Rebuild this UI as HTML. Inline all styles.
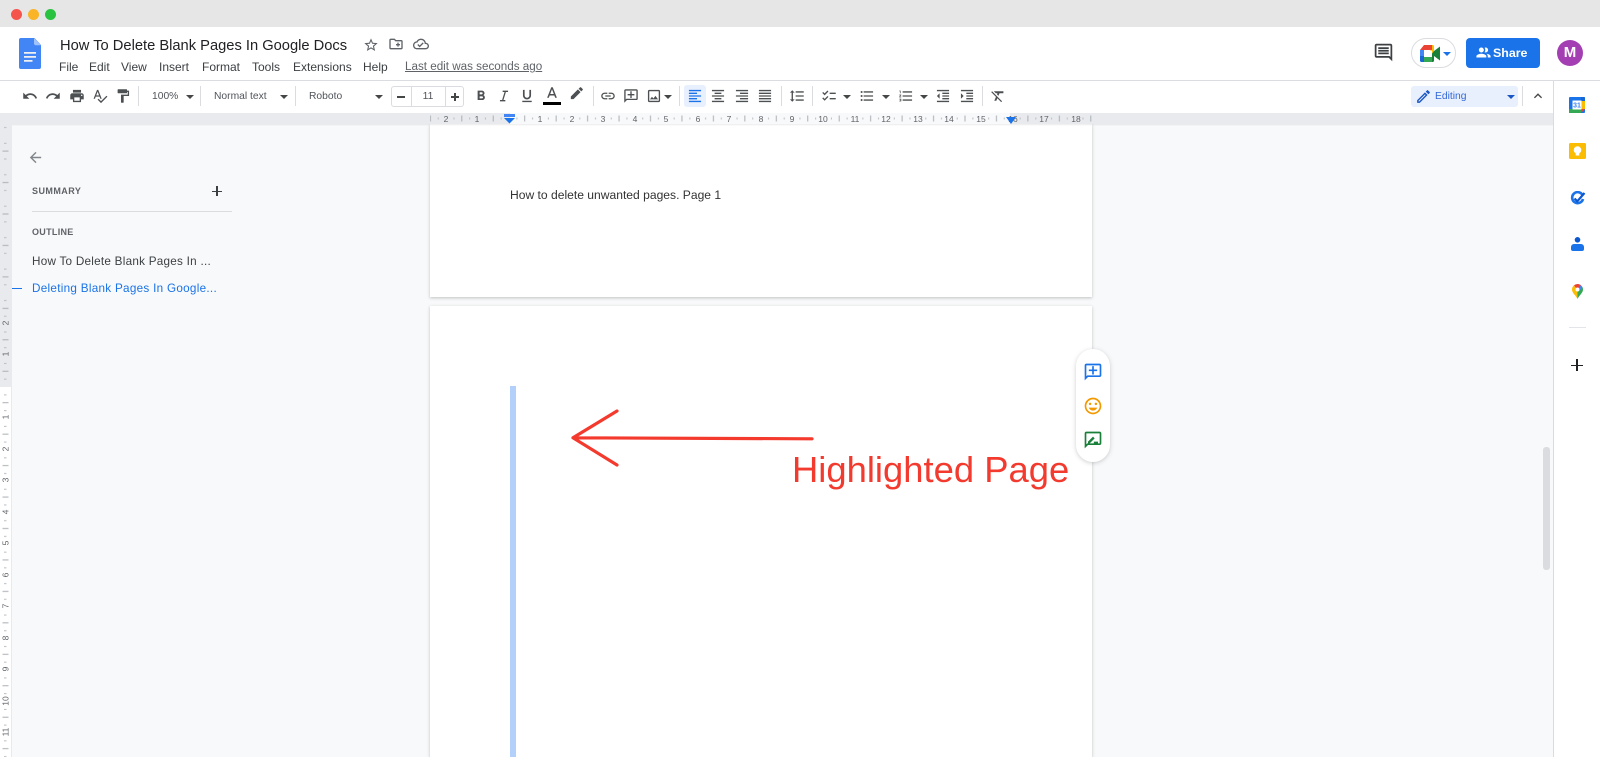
<!DOCTYPE html>
<html><head><meta charset="utf-8"><title>How To Delete Blank Pages In Google Docs</title>
<style>
html,body{margin:0;padding:0;width:1600px;height:757px;overflow:hidden;background:#f8f9fa;font-family:"Liberation Sans",sans-serif}
#w{position:absolute;left:0;top:0;width:1600px;height:757px;overflow:hidden;background:#f8f9fa;filter:blur(.3px)}
.a{position:absolute}
.t{position:absolute;white-space:nowrap;line-height:1}
svg.i{position:absolute;width:18px;height:18px;top:87px;fill:#4d5052}
svg.i:not([style*="top"]){transform:scale(.9)}
.m{position:absolute;top:60px;font-size:12px;line-height:14px;color:#3c4043}
.tb{position:absolute;top:91px;font-size:10.3px;line-height:12px;color:#50545a;white-space:nowrap}
.sep{position:absolute;top:86px;width:1px;height:20px;background:#dadce0}
.ar{position:absolute;width:0;height:0;border-left:4px solid transparent;border-right:4px solid transparent;border-top:4px solid #444746;top:95px}
.rn{position:absolute;top:114px;width:20px;margin-left:-10px;text-align:center;font-size:8.5px;line-height:10px;color:#5f6368}
.vn{position:absolute;left:0;width:11px;height:10px;margin-top:-5px;text-align:center;font-size:8.5px;line-height:10px;color:#5f6368;transform:rotate(-90deg)}
</style></head><body><div id="w">
<!-- mac bar -->
<div class="a" style="left:0;top:0;width:1600px;height:27px;background:#e6e6e6"></div>
<div class="a" style="left:11px;top:9px;width:11px;height:11px;border-radius:50%;background:#f5544d"></div>
<div class="a" style="left:28px;top:9px;width:11px;height:11px;border-radius:50%;background:#fab427"></div>
<div class="a" style="left:45px;top:9px;width:11px;height:11px;border-radius:50%;background:#29c33f"></div>
<!-- header -->
<div class="a" style="left:0;top:27px;width:1600px;height:53px;background:#fff"></div>
<div class="a" style="left:0;top:80px;width:1600px;height:1px;background:#dadce0"></div>
<div class="a" style="left:0;top:81px;width:1553px;height:32px;background:#fff"></div>
<div class="a" style="left:1553px;top:81px;width:47px;height:676px;background:#fff;border-left:1px solid #dadce0;box-sizing:border-box"></div>
<svg class="a" style="left:19px;top:38px" width="22" height="31" viewBox="0 0 22 31"><path d="M2 0h13.500L22 7v22a2 2 0 0 1-2 2H2a2 2 0 0 1-2-2V2a2 2 0 0 1 2-2z" fill="#4285f4"/><path d="M15 0l7 7.200h-5a2 2 0 0 1-2-2z" fill="#a1c2fa"/><path d="M5 14h12v1.800H5zM5 18h12v1.800H5zM5 22h8.500v1.800H5z" fill="#f1f1f1"/></svg>
<div class="t" style="left:60px;top:37px;font-size:14.700px;line-height:18px;color:#202124">How To Delete Blank Pages In Google Docs</div>
<svg class="i" style="left:363px;top:37px;width:16px;height:16px;fill:#5f6368" viewBox="0 0 24 24"><path d="M22 9.240l-7.190-.620L12 2 9.190 8.630 2 9.240l5.460 4.730L5.820 21 12 17.270 18.180 21l-1.630-7.030L22 9.240zM12 15.400l-3.760 2.270 1-4.280-3.320-2.880 4.380-.380L12 6.100l1.710 4.040 4.380.380-3.320 2.880 1 4.280L12 15.400z"/></svg>
<svg class="i" style="left:388px;top:36px;width:16px;height:16px;fill:#5f6368" viewBox="0 0 24 24"><path d="M20 6h-8l-2-2H4c-1.110 0-1.990.890-1.990 2L2 18c0 1.110.890 2 2 2h16c1.110 0 2-.890 2-2V8c0-1.110-.890-2-2-2zm0 12H4V6h5.170l2 2H20v10zm-8-4h2v2h2v-2h2v-2h-2v-2h-2v2h-2v2z"/></svg>
<svg class="i" style="left:413px;top:36px;width:16px;height:16px;fill:#5f6368" viewBox="0 0 24 24"><path d="M19.350 10.040C18.670 6.590 15.640 4 12 4 9.110 4 6.600 5.640 5.350 8.040 2.340 8.360 0 10.910 0 14c0 3.310 2.690 6 6 6h13c2.760 0 5-2.240 5-5 0-2.640-2.050-4.780-4.650-4.960zM19 18H6c-2.210 0-4-1.790-4-4s1.790-4 4-4h.710C7.370 7.690 9.480 6 12 6c3.040 0 5.500 2.460 5.500 5.500v.5H19c1.660 0 3 1.340 3 3s-1.340 3-3 3zm-9-3.820l-2.090-2.090L6.500 13.500 10 17l6.010-6.010-1.410-1.410z"/></svg>
<div class="m" style="left:59px">File</div><div class="m" style="left:89px">Edit</div><div class="m" style="left:121px">View</div><div class="m" style="left:159px">Insert</div><div class="m" style="left:202px">Format</div><div class="m" style="left:252px">Tools</div><div class="m" style="left:293px">Extensions</div><div class="m" style="left:363px">Help</div>
<div class="m" style="left:405px;color:#5f6368;text-decoration:underline;font-size:11.650px">Last edit was seconds ago</div>
<!-- header right -->
<svg class="i" style="left:1373px;top:42px;width:21px;height:21px;fill:#3c4043" viewBox="0 0 24 24"><path d="M21.990 4c0-1.100-.890-2-1.990-2H4c-1.100 0-2 .900-2 2v12c0 1.100.900 2 2 2h14l4 4-.010-18zM20 4v13.170L18.830 16H4V4h16zM6 12h12v2H6zm0-3h12v2H6zm0-3h12v2H6z"/></svg>
<div class="a" style="left:1411px;top:38px;width:45px;height:30px;border:1px solid #dadce0;border-radius:16px;box-sizing:border-box;background:#fff"></div>
<svg class="a" style="left:1420px;top:45px" width="20" height="17" viewBox="0 0 20 17"><path d="M4 0h8v5H4z" fill="#ea4335"/><path d="M4 0v5H0z" fill="#ea4335"/><path d="M0 5h4v6H0z" fill="#4285f4"/><path d="M0 11h4v6H1.500A1.500 1.500 0 0 1 0 15.500z" fill="#1967d2"/><path d="M4 12h8v5H4z" fill="#34a853"/><path d="M12 0h.5A1.500 1.500 0 0 1 14 1.500V6l-2 2.500L10 5h2z" fill="#fbbc04"/><path d="M12 8.500l2-2.500 6-4.500v14L14 11v4.500a1.500 1.500 0 0 1-1.500 1.500H12z" fill="#188038"/><path d="M5 5.500h7v6H5z" fill="#fff"/></svg>
<div class="ar" style="left:1443px;top:52px;border-top-color:#1a73e8"></div>
<div class="a" style="left:1466px;top:38px;width:74px;height:30px;border-radius:4px;background:#1a73e8"></div>
<svg class="i" style="left:1475px;top:44px;width:17px;height:17px;fill:#fff" viewBox="0 0 24 24"><path d="M9 13.750c-2.340 0-7 1.170-7 3.500V19h14v-1.750c0-2.330-4.660-3.500-7-3.500zM9 12c1.930 0 3.500-1.570 3.500-3.500S10.930 5 9 5 5.500 6.570 5.500 8.500 7.070 12 9 12zm7.040 1.810c1.160.840 1.960 1.960 1.960 3.440V19h4v-1.750c0-2.020-3.500-3.170-5.960-3.440zM15 12c1.930 0 3.500-1.570 3.500-3.500S16.930 5 15 5c-.540 0-1.040.130-1.500.350.630.890 1 1.980 1 3.150s-.370 2.260-1 3.150c.460.220.960.350 1.500.350z"/></svg>
<div class="t" style="left:1493px;top:46px;font-size:12.400px;line-height:14px;font-weight:700;color:#fff">Share</div>
<div class="a" style="left:1557px;top:40px;width:26px;height:26px;border-radius:50%;background:#a43fb3;color:#fff;text-align:center;font-size:15px;font-weight:700;line-height:26px">M</div>
<!-- toolbar -->
<svg class="i" style="left:21px" viewBox="0 0 24 24"><path d="M12.500 8c-2.650 0-5.050.990-6.900 2.600L2 7v9h9l-3.620-3.620c1.390-1.160 3.160-1.880 5.120-1.880 3.540 0 6.550 2.310 7.600 5.500l2.370-.780C21.080 11.030 17.150 8 12.500 8z"/></svg>
<svg class="i" style="left:44px" viewBox="0 0 24 24"><path d="M18.400 10.600C16.550 8.990 14.150 8 11.500 8c-4.650 0-8.580 3.030-9.960 7.220L3.900 16c1.050-3.190 4.050-5.500 7.600-5.500 1.950 0 3.730.720 5.120 1.880L13 16h9V7l-3.600 3.600z"/></svg>
<svg class="i" style="left:68px" viewBox="0 0 24 24"><path d="M19 8H5c-1.660 0-3 1.340-3 3v6h4v4h12v-4h4v-6c0-1.660-1.340-3-3-3zm-3 11H8v-5h8v5zm3-7c-.550 0-1-.450-1-1s.450-1 1-1 1 .450 1 1-.450 1-1 1zm-1-9H6v4h12V3z"/></svg>
<svg class="i" style="left:91px" viewBox="0 0 24 24"><path d="M12.450 16h2.090L9.430 3H7.570L2.460 16h2.090l1.120-3h5.640l1.140 3zm-6.020-5L8.500 5.480 10.570 11H6.430zm15.160.590l-8.090 8.090L9.830 16l-1.410 1.410 5.090 5.090L23 13l-1.410-1.410z"/></svg>
<svg class="i" style="left:114px" viewBox="0 0 24 24"><path d="M18 4V3c0-.550-.450-1-1-1H5c-.550 0-1 .450-1 1v4c0 .550.450 1 1 1h12c.550 0 1-.450 1-1V6h1v4H9v11c0 .550.450 1 1 1h2c.550 0 1-.450 1-1v-9h8V4h-3z"/></svg>
<div class="sep" style="left:138px"></div>
<div class="tb" style="left:152px">100%</div><div class="ar" style="left:186px"></div>
<div class="sep" style="left:200px"></div>
<div class="tb" style="left:214px">Normal text</div><div class="ar" style="left:280px"></div>
<div class="sep" style="left:295px"></div>
<div class="tb" style="left:309px">Roboto</div><div class="ar" style="left:375px"></div>
<div class="a" style="left:391px;top:86px;width:73px;height:21px;border:1px solid #dadce0;border-radius:3px;box-sizing:border-box"></div>
<div class="a" style="left:411px;top:86px;width:1px;height:21px;background:#dadce0"></div>
<div class="a" style="left:445px;top:86px;width:1px;height:21px;background:#dadce0"></div>
<div class="a" style="left:397px;top:96px;width:8px;height:1.500px;background:#444746"></div>
<div class="tb" style="left:411px;width:34px;text-align:center">11</div>
<div class="a" style="left:451px;top:96px;width:8px;height:1.500px;background:#444746"></div>
<div class="a" style="left:454.300px;top:92.500px;width:1.500px;height:8px;background:#444746"></div>
<svg class="i" style="left:472px" viewBox="0 0 24 24"><path d="M15.600 10.790c.970-.670 1.650-1.770 1.650-2.790 0-2.260-1.750-4-4-4H7v14h7.040c2.090 0 3.710-1.700 3.710-3.790 0-1.520-.860-2.820-2.150-3.420zM10 6.500h3c.830 0 1.500.670 1.500 1.500s-.670 1.500-1.500 1.500h-3v-3zm3.500 9H10v-3h3.500c.830 0 1.500.670 1.500 1.500s-.670 1.500-1.500 1.500z"/></svg>
<svg class="i" style="left:495px" viewBox="0 0 24 24"><path d="M10 4v2h2.800l-3.600 12H6v2h8v-2h-2.800l3.600-12H18V4z"/></svg>
<svg class="i" style="left:518px" viewBox="0 0 24 24"><path d="M12 17c3.310 0 6-2.690 6-6V3h-2.500v8c0 1.930-1.570 3.500-3.500 3.500S8.500 12.930 8.500 11V3H6v8c0 3.310 2.690 6 6 6zm-7 2v2h14v-2H5z"/></svg>
<svg class="i" style="left:543px;top:85px" viewBox="0 0 24 24"><path d="M11 3L5.500 17h2.250l1.120-3h6.250l1.120 3h2.250L13 3h-2zm-1.380 9L12 5.670 14.380 12H9.620z"/></svg>
<div class="a" style="left:543px;top:102px;width:18px;height:3px;background:#000"></div>
<svg class="i" style="left:568px;top:85px;width:17px;height:17px" viewBox="0 0 24 24"><path d="M17.750 7 14 3.250l-10 10V17h3.750l10-10zm2.960-2.960a.996.996 0 0 0 0-1.410L18.370.290a.996.996 0 0 0-1.410 0L15 2.250 18.750 6l1.960-1.960z" transform="translate(0,3)"/></svg>
<div class="sep" style="left:593px"></div>
<svg class="i" style="left:599px" viewBox="0 0 24 24"><path d="M3.900 12c0-1.710 1.390-3.100 3.100-3.100h4V7H7c-2.760 0-5 2.240-5 5s2.240 5 5 5h4v-1.900H7c-1.710 0-3.100-1.390-3.100-3.100zM8 13h8v-2H8v2zm9-6h-4v1.900h4c1.710 0 3.100 1.390 3.100 3.100s-1.390 3.100-3.100 3.100h-4V17h4c2.760 0 5-2.240 5-5s-2.240-5-5-5z"/></svg>
<svg class="i" style="left:622px" viewBox="0 0 24 24"><path d="M20 2H4c-1.100 0-2 .900-2 2v18l4-4h14c1.100 0 2-.900 2-2V4c0-1.100-.900-2-2-2zm0 14H5.170L4 17.170V4h16v12zM11 5h2v4h4v2h-4v4h-2v-4H7V9h4V5z"/></svg>
<svg class="i" style="left:645px" viewBox="0 0 24 24"><path d="M19 5v14H5V5h14m0-2H5c-1.100 0-2 .900-2 2v14c0 1.100.900 2 2 2h14c1.100 0 2-.900 2-2V5c0-1.100-.900-2-2-2zm-4.860 8.860l-3 3.870L9 13.140 6 17h12l-3.860-5.140z"/></svg>
<div class="ar" style="left:664px"></div>
<div class="sep" style="left:679px"></div>
<div class="a" style="left:684px;top:85px;width:22px;height:22px;border-radius:3px;background:#e8f0fe"></div>
<svg class="i" style="left:686px;fill:#1a73e8" viewBox="0 0 24 24"><path d="M15 15H3v2h12v-2zm0-8H3v2h12V7zM3 13h18v-2H3v2zm0 8h18v-2H3v2zM3 3v2h18V3H3z"/></svg>
<svg class="i" style="left:709px" viewBox="0 0 24 24"><path d="M7 15v2h10v-2H7zm-4 6h18v-2H3v2zm0-8h18v-2H3v2zm4-6v2h10V7H7zM3 3v2h18V3H3z"/></svg>
<svg class="i" style="left:733px" viewBox="0 0 24 24"><path d="M3 21h18v-2H3v2zm6-4h12v-2H9v2zm-6-4h18v-2H3v2zm6-4h12V7H9v2zM3 3v2h18V3H3z"/></svg>
<svg class="i" style="left:756px" viewBox="0 0 24 24"><path d="M3 21h18v-2H3v2zm0-4h18v-2H3v2zm0-4h18v-2H3v2zm0-4h18V7H3v2zm0-6v2h18V3H3z"/></svg>
<div class="sep" style="left:781px"></div>
<svg class="i" style="left:788px" viewBox="0 0 24 24"><path d="M6 7h2.500L5 3.500 1.500 7H4v10H1.500L5 20.500 8.500 17H6V7zm4-2v2h12V5H10zm0 14h12v-2H10v2zm0-6h12v-2H10v2z"/></svg>
<div class="sep" style="left:812px"></div>
<svg class="i" style="left:820px" viewBox="0 0 24 24"><path d="M22 7h-9v2h9V7zm0 8h-9v2h9v-2zM5.540 11 2 7.460l1.410-1.410 2.120 2.120 4.240-4.240 1.410 1.410L5.540 11zm0 8L2 15.460l1.410-1.410 2.120 2.120 4.240-4.240 1.410 1.410L5.540 19z"/></svg>
<div class="ar" style="left:843px"></div>
<svg class="i" style="left:858px" viewBox="0 0 24 24"><path d="M4 10.500c-.830 0-1.500.670-1.500 1.500s.670 1.500 1.500 1.500 1.500-.670 1.500-1.500-.670-1.500-1.500-1.500zm0-6c-.830 0-1.500.670-1.500 1.500S3.170 7.500 4 7.500 5.500 6.830 5.500 6 4.830 4.500 4 4.500zm0 12c-.830 0-1.500.680-1.500 1.500s.680 1.500 1.500 1.500 1.500-.680 1.500-1.500-.670-1.500-1.500-1.500zM7 19h14v-2H7v2zm0-6h14v-2H7v2zm0-8v2h14V5H7z"/></svg>
<div class="ar" style="left:882px"></div>
<svg class="i" style="left:897px" viewBox="0 0 24 24"><path d="M2 17h2v.5H3v1h1v.5H2v1h3v-4H2v1zm1-9h1V4H2v1h1v3zm-1 3h1.800L2 13.100v.9h3v-1H3.200L5 10.900V10H2v1zm5-6v2h14V5H7zm0 14h14v-2H7v2zm0-6h14v-2H7v2z"/></svg>
<div class="ar" style="left:920px"></div>
<svg class="i" style="left:934px" viewBox="0 0 24 24"><path d="M11 17h10v-2H11v2zm-8-5l4 4V8l-4 4zm0 9h18v-2H3v2zM3 3v2h18V3H3zm8 6h10V7H11v2zm0 4h10v-2H11v2z"/></svg>
<svg class="i" style="left:958px" viewBox="0 0 24 24"><path d="M3 21h18v-2H3v2zM3 8v8l4-4-4-4zm8 9h10v-2H11v2zM3 3v2h18V3H3zm8 6h10V7H11v2zm0 4h10v-2H11v2z"/></svg>
<div class="sep" style="left:982px"></div>
<svg class="i" style="left:989px" viewBox="0 0 24 24"><path d="M3.270 5L2 6.270l6.970 6.970L6.500 19h3l1.570-3.660L16.730 21 18 19.730 3.550 5.270 3.270 5zM6 5v.180L8.820 8h2.400l-.720 1.680 2.100 2.100L14.210 8H20V5H6z"/></svg>
<!-- editing -->
<div class="a" style="left:1411px;top:86px;width:107px;height:21px;border-radius:3px;background:#e8f0fe"></div>
<svg class="i" style="left:1415px;top:88px;width:17px;height:17px;fill:#1a56c4" viewBox="0 0 24 24"><path d="M14.060 9.020l.920.920L5.920 19H5v-.920l9.060-9.060M17.660 3c-.250 0-.510.100-.700.290l-1.830 1.830 3.750 3.750 1.830-1.830c.390-.390.390-1.020 0-1.410l-2.340-2.340c-.200-.200-.450-.290-.710-.290zm-3.600 3.190L3 17.250V21h3.750L17.810 9.940l-3.750-3.750z"/></svg>
<div class="tb" style="left:1435px;color:#3367d6">Editing</div>
<div class="ar" style="left:1507px;border-top-color:#1a56c4"></div>
<div class="sep" style="left:1522px"></div>
<svg class="i" style="left:1529px;fill:#444746" viewBox="0 0 24 24"><path d="M7.410 15.410 12 10.830l4.590 4.580L18 14l-6-6-6 6z"/></svg>
<!-- main pages -->
<div class="a" style="left:430px;top:124px;width:662px;height:173px;background:#fff;box-shadow:0 1px 3px rgba(60,64,67,.3)"></div>
<div class="a" style="left:430px;top:306px;width:662px;height:451px;background:#fff;box-shadow:0 1px 3px rgba(60,64,67,.3)"></div>
<div class="t" style="left:510px;top:188px;font-size:12.100px;line-height:15px;color:#333">How to delete unwanted pages. Page 1</div>
<div class="a" style="left:510px;top:386px;width:6px;height:371px;background:#b3d0fb"></div>
<svg class="a" style="left:560px;top:400px" width="265" height="75" viewBox="560 400 265 75"><path d="M812 438.800L573 437.800M617 411L573 437.800 617 465" fill="none" stroke="#f4392d" stroke-width="3.200" stroke-linecap="round" stroke-linejoin="round"/></svg>
<div class="t" style="left:792px;top:447px;font-size:36.400px;line-height:46px;color:#f33a2e">Highlighted Page</div>
<!-- float bubble -->
<div class="a" style="left:1076px;top:349px;width:34px;height:113px;border-radius:17px;background:#fff;box-shadow:0 1px 4px rgba(60,64,67,.25)"></div>
<svg class="i" style="left:1083px;top:362px;width:20px;height:20px;fill:#1a73e8" viewBox="0 0 24 24"><path d="M20 2H4c-1.100 0-2 .900-2 2v18l4-4h14c1.100 0 2-.900 2-2V4c0-1.100-.900-2-2-2zm0 14H5.170L4 17.170V4h16v12zM11 5h2v4h4v2h-4v4h-2v-4H7V9h4V5z"/></svg>
<svg class="i" style="left:1083px;top:396px;width:20px;height:20px;fill:#f29900" viewBox="0 0 24 24"><path d="M11.990 2C6.470 2 2 6.480 2 12s4.470 10 9.990 10C17.520 22 22 17.520 22 12S17.520 2 11.990 2zM12 20c-4.420 0-8-3.580-8-8s3.580-8 8-8 8 3.580 8 8-3.580 8-8 8zm3.500-9c.830 0 1.500-.670 1.500-1.500S16.330 8 15.500 8 14 8.670 14 9.500s.670 1.500 1.500 1.500zm-7 0c.830 0 1.500-.670 1.500-1.500S9.330 8 8.500 8 7 8.670 7 9.500 7.670 11 8.500 11zm3.500 6.500c2.330 0 4.310-1.460 5.110-3.500H6.890c.800 2.040 2.780 3.500 5.110 3.500z"/></svg>
<svg class="i" style="left:1083px;top:430px;width:20px;height:20px;fill:#188038" viewBox="0 0 24 24"><path d="M20 2H4c-1.100 0-2 .900-2 2v18l4-4h14c1.100 0 2-.900 2-2V4c0-1.100-.900-2-2-2zm0 14H5.170L4 17.170V4h16v12zM6 14l6-6 2 2-6 6H6v-2zm7 0h5v2h-5z"/></svg>
<!-- sidebar -->
<svg class="a" style="left:27px;top:149px" width="17" height="17" viewBox="0 0 24 24"><path d="M20 11H7.830l5.590-5.590L12 4l-8 8 8 8 1.410-1.410L7.830 13H20v-2z" fill="#80868b"/></svg>
<div class="t" style="left:32px;top:186px;font-size:9px;line-height:10px;font-weight:700;letter-spacing:.45px;color:#5f6368">SUMMARY</div>
<div class="a" style="left:212px;top:190.500px;width:10px;height:1.200px;background:#3c4043"></div>
<div class="a" style="left:216.400px;top:186px;width:1.200px;height:10px;background:#3c4043"></div>
<div class="a" style="left:32px;top:211px;width:200px;height:1px;background:#dadce0"></div>
<div class="t" style="left:32px;top:227px;font-size:9px;line-height:10px;font-weight:700;letter-spacing:.3px;color:#5f6368">OUTLINE</div>
<div class="t" style="left:32px;top:255px;font-size:11.700px;line-height:14px;letter-spacing:.26px;color:#3c4043">How To Delete Blank Pages In ...</div>
<div class="t" style="left:32px;top:282px;font-size:11.700px;line-height:14px;letter-spacing:.29px;color:#1a73e8">Deleting Blank Pages In Google...</div>
<div class="a" style="left:12px;top:288px;width:10px;height:1px;background:#1a73e8"></div>
<!-- h ruler -->
<div class="a" style="left:0;top:113px;width:1553px;height:11px;background:#e8eaed"></div>
<div class="a" style="left:510px;top:113px;width:500px;height:11px;background:#f8f9fa"></div>
<div class="a" style="left:0;top:124px;width:1553px;height:2px;background:linear-gradient(rgba(60,64,67,.1),rgba(60,64,67,0))"></div>
<svg class="a" style="left:430px;top:113px" width="662" height="11">
<defs><pattern id="hp" x="79" y="0" width="31.450" height="11" patternUnits="userSpaceOnUse"><rect x="15.200" y="2.500" width="1" height="6" fill="#aaafb4"/><rect x="7.400" y="4.500" width="1" height="2" fill="#b9bdc1"/><rect x="23.100" y="4.500" width="1" height="2" fill="#b9bdc1"/></pattern></defs>
<rect width="662" height="11" fill="url(#hp)"/></svg>
<div class="rn" style="left:446px">2</div><div class="rn" style="left:477px">1</div><div class="rn" style="left:540px">1</div><div class="rn" style="left:572px">2</div><div class="rn" style="left:603px">3</div><div class="rn" style="left:635px">4</div><div class="rn" style="left:666px">5</div><div class="rn" style="left:698px">6</div><div class="rn" style="left:729px">7</div><div class="rn" style="left:761px">8</div><div class="rn" style="left:792px">9</div><div class="rn" style="left:823px">10</div><div class="rn" style="left:855px">11</div><div class="rn" style="left:886px">12</div><div class="rn" style="left:918px">13</div><div class="rn" style="left:949px">14</div><div class="rn" style="left:981px">15</div><div class="rn" style="left:1013px">16</div><div class="rn" style="left:1044px">17</div><div class="rn" style="left:1076px">18</div>
<svg class="a" style="left:503px;top:114px" width="13" height="10" viewBox="0 0 13 10"><rect x="1" y="0" width="11" height="3" fill="#4285f4"/><path d="M1 4h11L6.500 9.500z" fill="#1a73e8"/></svg>
<svg class="a" style="left:1005px;top:117px" width="12" height="8" viewBox="0 0 12 8"><path d="M1 0h10L6 7z" fill="#1a73e8"/></svg>
<!-- v ruler -->
<div class="a" style="left:0;top:124px;width:12px;height:263px;background:#e8eaed"></div>
<div class="a" style="left:0;top:387px;width:12px;height:370px;box-sizing:border-box;background:#fff;border-right:1px solid #e8eaed"></div>
<svg class="a" style="left:0;top:124px" width="11" height="633">
<defs><pattern id="vp" x="0" y="11.400" width="11" height="31.450" patternUnits="userSpaceOnUse"><rect x="2.500" y="15.200" width="6" height="1" fill="#aaafb4"/><rect x="4" y="7.400" width="2.500" height="1" fill="#b9bdc1"/><rect x="4" y="23.100" width="2.500" height="1" fill="#b9bdc1"/></pattern></defs>
<rect width="11" height="633" fill="url(#vp)"/></svg>
<div class="vn" style="top:323px">2</div><div class="vn" style="top:354px">1</div><div class="vn" style="top:417px">1</div><div class="vn" style="top:449px">2</div><div class="vn" style="top:480px">3</div><div class="vn" style="top:512px">4</div><div class="vn" style="top:543px">5</div><div class="vn" style="top:575px">6</div><div class="vn" style="top:606px">7</div><div class="vn" style="top:638px">8</div><div class="vn" style="top:669px">9</div><div class="vn" style="top:701px">10</div><div class="vn" style="top:732px">11</div>
<!-- scrollbar -->
<div class="a" style="left:1543px;top:447px;width:7px;height:123px;border-radius:3px;background:#dadce0"></div>
<!-- rail icons -->
<svg class="a" style="left:1569px;top:97px" width="16" height="16" viewBox="0 0 16 16"><rect width="16" height="16" rx="1" fill="#1a73e8"/><path d="M12 0h3a1 1 0 0 1 1 1v3h-4z" fill="#1967d2"/><rect x="12" y="4" width="4" height="8" fill="#fbbc04"/><rect x="0" y="12" width="12" height="4" fill="#34a853"/><path d="M12 12h4l-4 4z" fill="#ea4335"/><rect x="3.500" y="3.500" width="9" height="9" fill="#fff"/><text x="8" y="10.500" font-size="7" font-weight="700" text-anchor="middle" fill="#4285f4" font-family="Liberation Sans">31</text></svg>
<svg class="a" style="left:1569px;top:143px" width="17" height="16" viewBox="0 0 17 16"><rect width="17" height="16" rx="1.500" fill="#fbbc04"/><circle cx="8.500" cy="7" r="3.800" fill="#fff"/><rect x="6.700" y="10" width="3.600" height="2.500" fill="#fff"/></svg>
<svg class="a" style="left:1570px;top:191px" width="16" height="15" viewBox="0 0 16 15"><path d="M12.500 4A5.500 5.500 0 1 0 13 8" fill="none" stroke="#1a73e8" stroke-width="2.600"/><path d="M4.500 7.500l2.800 2.800L14.500 2" fill="none" stroke="#0b57d0" stroke-width="2.200"/></svg>
<svg class="a" style="left:1571px;top:237px" width="13" height="14" viewBox="0 0 13 14"><circle cx="6.500" cy="2.800" r="2.800" fill="#0b57d0"/><path d="M3 7h7a3 3 0 0 1 3 3v2a2 2 0 0 1-2 2H2a2 2 0 0 1-2-2v-2a3 3 0 0 1 3-3z" fill="#1a73e8"/></svg>
<svg class="a" style="left:1572px;top:284px" width="11" height="15" viewBox="0 0 11 15"><path d="M5.500 15C4 11.500 0 9 0 5.500a5.500 5.500 0 0 1 2-4.200L5.500 6z" fill="#fbbc04"/><path d="M5.500 15C7 11.500 11 9 11 5.500c0-.900-.200-1.800-.700-2.500L5.500 6z" fill="#34a853"/><path d="M2 1.300A5.500 5.500 0 0 1 5.500 0c2 0 3.800 1.100 4.800 3L5.500 6z" fill="#ea4335"/><path d="M7.700 1 10.300 3 7 8z" fill="#4285f4"/><circle cx="5.500" cy="5.500" r="2" fill="#fff"/></svg>
<div class="a" style="left:1569px;top:327px;width:17px;height:1px;background:#e3e5e8"></div>
<div class="a" style="left:1571px;top:364.500px;width:12px;height:1.500px;background:#202124"></div>
<div class="a" style="left:1576.300px;top:359px;width:1.500px;height:12px;background:#202124"></div>
</div></body></html>
